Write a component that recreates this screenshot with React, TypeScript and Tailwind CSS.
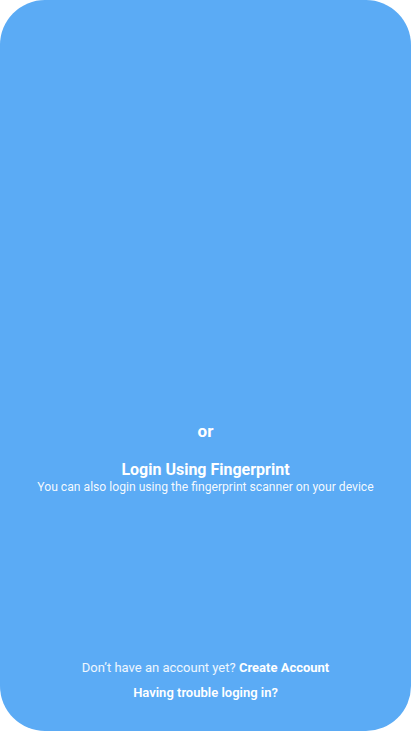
export default function App() {
  return (
    <div className="bg-white w-[411px] h-[731px]" style={{ fontFamily: 'Roboto, "Noto Sans", sans-serif' }}>
      <div className="flex flex-col items-center h-full rounded-[45px] bg-[#5babf5] text-white text-center pt-[419px] pb-[29px]">
        {/* divider text */}
        <p className="text-[17px] leading-[24px] font-bold">or</p>

        <div className="mt-[17px] flex flex-col items-center">
          <h2 className="text-[16px] leading-[19px] font-bold">Login Using Fingerprint</h2>
          <p className="text-[12.15px] leading-[16px] text-white/95">
            You can also login using the fingerprint scanner on your device
          </p>
        </div>

        <div className="flex-1" />

        <div className="flex flex-col items-center gap-[7px]">
          <p className="text-[13px] leading-[18px] text-white/90">
            Don’t have an account yet? <span className="font-bold text-white">Create Account</span>
          </p>
          <p className="text-[13px] leading-[18px] font-semibold">Having trouble loging in?</p>
        </div>
      </div>
    </div>
  );
}
